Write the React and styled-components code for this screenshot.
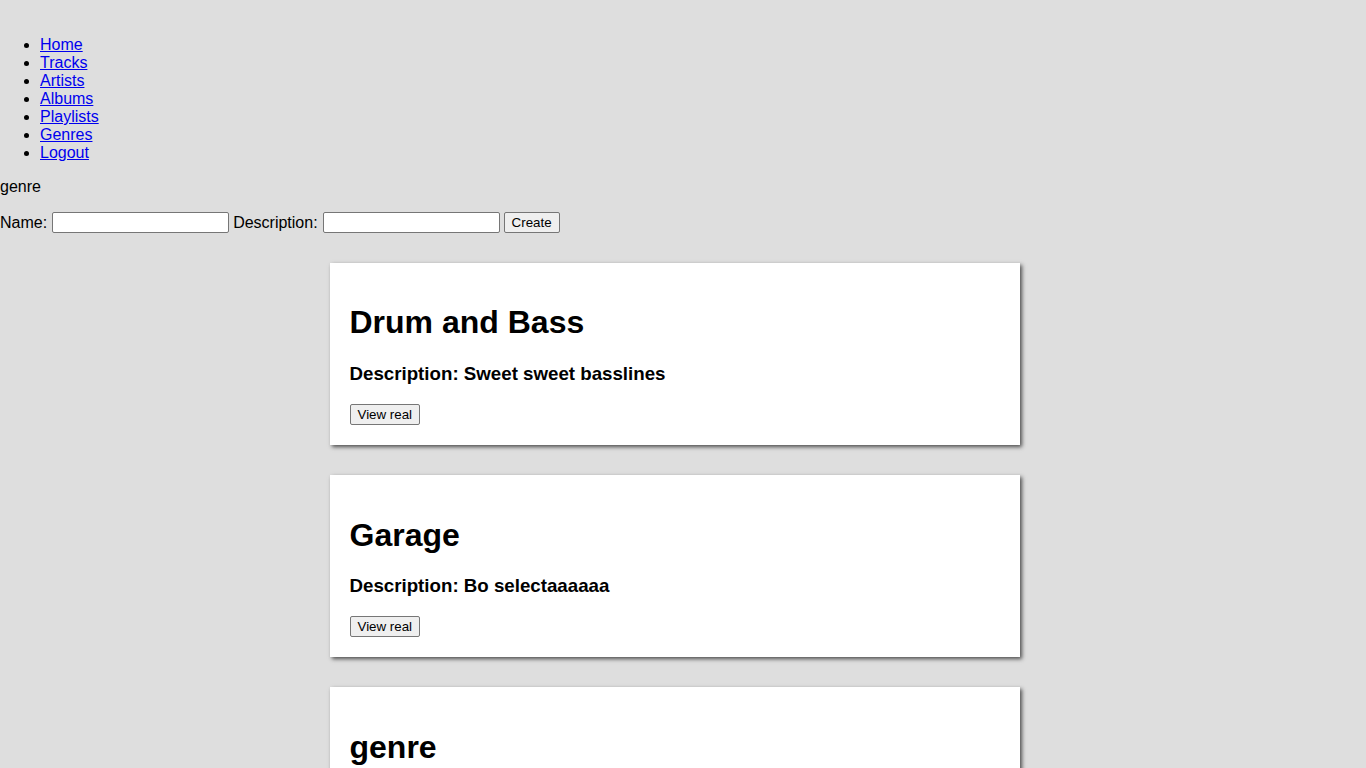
import React, { useState } from "react";
import styled, { createGlobalStyle } from "styled-components";

const GlobalStyle = createGlobalStyle`
  html {
    overflow-y: scroll;
  }
  html, body {
    margin: 0;
    padding: 0;
    background: #dedede;
  }
  body {
    font-family: "Liberation Sans", Arial, sans-serif;
    font-size: 16px;
    color: #000;
  }
`;

// leaves room for the 17px scrollbar gutter the reference browser shows
const Page = styled.div`
  padding-right: 17px;
`;

const Nav = styled.nav`
  padding-top: 20px;
`;

const NavList = styled.ul`
  margin: 16px 0;
  padding-left: 40px;
  list-style: disc;
`;

const NavItem = styled.li`
  line-height: 18px;
`;

const NavLink = styled.a`
  color: #0000ee;
  text-decoration: underline;
`;

const Title = styled.p`
  margin: 16px 0;
  line-height: 18px;
`;

const Form = styled.form`
  display: flex;
  align-items: center;
  gap: 4px;
  height: 21px;
`;

const Label = styled.label`
  display: flex;
  align-items: center;
  gap: 5px;
`;

const Input = styled.input`
  box-sizing: border-box;
  width: 177px;
  height: 21px;
  padding: 1px 2px;
  border: 1px solid #767676;
  border-radius: 2px;
  background: #fff;
  font-family: "Liberation Sans", Arial, sans-serif;
  font-size: 13.33px;
`;

const Button = styled.button`
  box-sizing: border-box;
  height: ${(p) => (p.$tall ? "22px" : "21px")};
  padding: 1px 7px;
  border: 1px solid #767676;
  border-radius: 2px;
  background: #efefef;
  color: #000;
  font-family: "Liberation Sans", Arial, sans-serif;
  font-size: 13.33px;
  line-height: 17px;
`;

const List = styled.div`
  padding-bottom: 20px;
`;

const Card = styled.div`
  width: 650px;
  margin: 30px auto;
  padding: 20px;
  background: #fff;
  box-shadow: 2px 2px 4px rgba(0, 0, 0, 0.65);
  display: flow-root;
`;

const CardTitle = styled.h1`
  font-size: 32px;
  margin: 21.44px 0;
  line-height: 37px;
`;

const CardDesc = styled.h3`
  font-size: 18.72px;
  margin: 18.72px 0 19.72px;
  line-height: 21.5px;
`;

const links = ["Home", "Tracks", "Artists", "Albums", "Playlists", "Genres", "Logout"];

const initialGenres = [
  { id: 1, name: "Drum and Bass", description: "Sweet sweet basslines" },
  { id: 2, name: "Garage", description: "Bo selectaaaaaa" },
  { id: 3, name: "genre", description: "genre" },
];

function App() {
  const [genres] = useState(initialGenres);
  const [name, setName] = useState("");
  const [desc, setDesc] = useState("");

  return (
    <Page>
      <GlobalStyle />
      <Nav>
        <NavList>
          {links.map((link) => (
            <NavItem key={link}>
              <NavLink href="#">{link}</NavLink>
            </NavItem>
          ))}
        </NavList>
      </Nav>
      <Title>genre</Title>
      <Form onSubmit={(e) => e.preventDefault()}>
        <Label>
          Name:
          <Input value={name} onChange={(e) => setName(e.target.value)} />
        </Label>
        <Label>
          Description:
          <Input value={desc} onChange={(e) => setDesc(e.target.value)} />
        </Label>
        <Button type="submit">Create</Button>
      </Form>
      <List>
        {genres &&
          genres.map((genre) => (
            <Card key={genre.id}>
              <CardTitle>{genre.name}</CardTitle>
              <CardDesc>Description: {genre.description}</CardDesc>
              <Button>View real</Button>
            </Card>
          ))}
      </List>
    </Page>
  );
}

export default App;
